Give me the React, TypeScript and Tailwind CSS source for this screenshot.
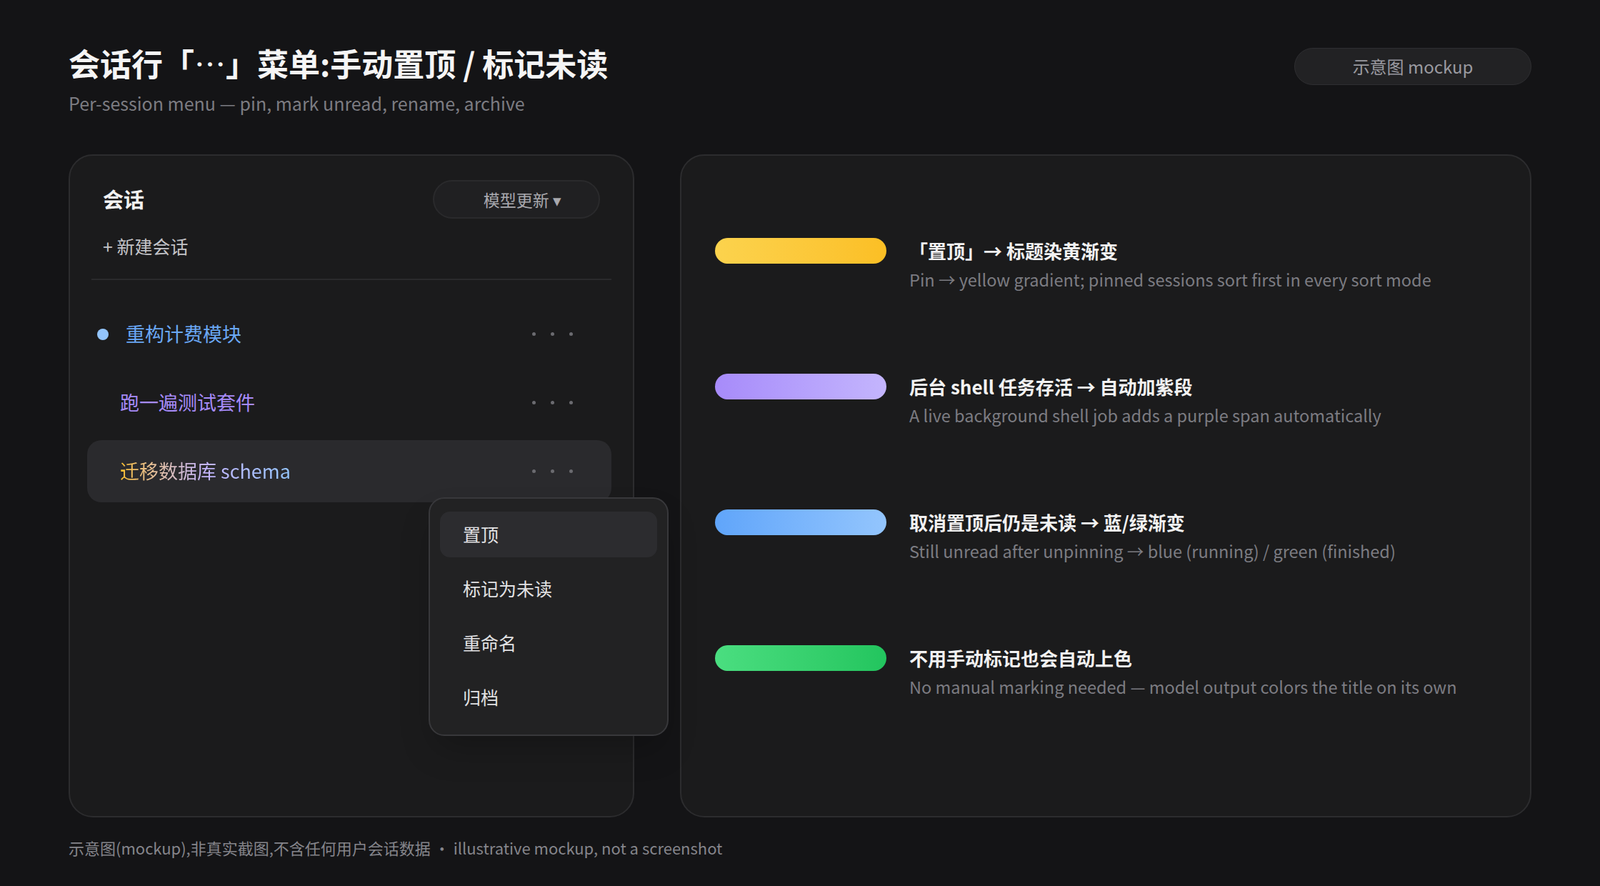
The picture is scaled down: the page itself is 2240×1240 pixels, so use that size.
export default function App() {
    const rules = [
        {
            bar: 'bg-gradient-to-r from-[#fcd34d] to-[#fbbf24]',
            title: '「置顶」→ 标题染黄渐变',
            desc: 'Pin → yellow gradient; pinned sessions sort first in every sort mode',
        },
        {
            bar: 'bg-gradient-to-r from-[#a78bfa] to-[#c4b5fd]',
            title: '后台 shell 任务存活 → 自动加紫段',
            desc: 'A live background shell job adds a purple span automatically',
        },
        {
            bar: 'bg-gradient-to-r from-[#60a5fa] to-[#93c5fd]',
            title: '取消置顶后仍是未读 → 蓝/绿渐变',
            desc: 'Still unread after unpinning → blue (running) / green (finished)',
        },
        {
            bar: 'bg-gradient-to-r from-[#4ade80] to-[#22c55e]',
            title: '不用手动标记也会自动上色',
            desc: 'No manual marking needed — model output colors the title on its own',
        },
    ];

    const menu = ['置顶', '标记为未读', '重命名', '归档'];

    const Dots = () => (
        <div className="flex gap-[21px] pr-[54px]">
            <span className="w-[5px] h-[5px] rounded-full bg-[#6b6b70]" />
            <span className="w-[5px] h-[5px] rounded-full bg-[#6b6b70]" />
            <span className="w-[5px] h-[5px] rounded-full bg-[#6b6b70]" />
        </div>
    );

    return (
        <div
            className="w-[2240px] h-[1240px] bg-[#141416] text-white px-[96px] pt-[58px] overflow-hidden"
            style={{ fontFamily: '"Noto Sans CJK SC", "Noto Sans", sans-serif' }}
        >
            {/* Header */}
            <div className="flex justify-between items-start h-[158px]">
                <div>
                    <h1 className="text-[44px] leading-[60px] font-bold text-[#f5f5f5]">
                        会话行「<span className="font-['Noto_Sans'] font-normal">…</span>」菜单:手动置顶 / 标记未读
                    </h1>
                    <p className="text-[25px] leading-[34px] mt-[9px] text-[#7c7c82]">
                        Per-session menu — pin, mark unread, rename, archive
                    </p>
                </div>
                <div className="mt-[9px] w-[332px] h-[52px] rounded-full bg-[#222224] border border-[#2e2e31] flex items-center justify-center text-[24px] text-[#9a9aa0]">
                    示意图 mockup
                </div>
            </div>

            <div className="flex gap-[64px]">
                {/* Left panel */}
                <div className="relative w-[792px] h-[928px] rounded-[34px] bg-[#1b1b1c] border-2 border-[#2c2c2e] px-[30px]">
                    <div className="flex items-center justify-between pl-[16px] pt-[34px] pr-[16px]">
                        <span className="text-[29px] font-bold text-[#f2f2f2]">会话</span>
                        <div className="w-[234px] h-[54px] rounded-full bg-[#202022] border-2 border-[#2a2a2c] flex items-center justify-end pr-[52px] text-[23px] text-[#a9a9ae]">
                            模型更新 ▾
                        </div>
                    </div>
                    <div className="pl-[16px] mt-[20px] text-[25px] text-[#c4c4c8]">+ 新建会话</div>
                    <div className="mt-[26px] h-[2px] bg-[#2a2a2c]" />

                    <div className="mt-[28px] flex flex-col">
                        <div className="h-[96px] flex items-center justify-between pl-[8px]">
                            <div className="flex items-center gap-[24px]">
                                <span className="w-[16px] h-[16px] rounded-full bg-[#93c5fd]" />
                                <span className="text-[27px] text-[#6aa8f5]">重构计费模块</span>
                            </div>
                            <Dots />
                        </div>
                        <div className="h-[96px] flex items-center justify-between pl-[40px]">
                            <span className="text-[27px] text-[#a78bfa]">跑一遍测试套件</span>
                            <Dots />
                        </div>
                        <div className="h-[87px] mt-[4px] -ml-[6px] mr-0 rounded-[20px] bg-[#2a2a2d] flex items-center justify-between pl-[46px]">
                            <span className="text-[27px] bg-gradient-to-r from-[#fbbf24] via-[#c4b5fd] to-[#93c5fd] bg-clip-text text-transparent">
                                迁移数据库 schema
                            </span>
                            <Dots />
                        </div>
                    </div>

                    {/* Context menu */}
                    <div className="absolute left-[502px] top-[478px] w-[336px] h-[334px] rounded-[22px] bg-[#222223] border-2 border-[#38383b] px-[14px] pt-[18px] shadow-2xl">
                        {menu.map((m, i) => (
                            <div
                                key={m}
                                className={`h-[64px] mb-[12px] rounded-[14px] flex items-center pl-[32px] text-[25px] text-[#e2e2e4] ${i === 0 ? 'bg-[#2c2c2f]' : ''}`}
                            >
                                {m}
                            </div>
                        ))}
                    </div>
                </div>

                {/* Right panel */}
                <div className="flex-1 h-[928px] rounded-[34px] bg-[#1b1b1c] border-2 border-[#2c2c2e] pl-[47px] pt-[114px] flex flex-col gap-[114px]">
                    {rules.map((r) => (
                        <div key={r.title} className="flex items-start gap-[32px]">
                            <div className={`w-[240px] h-[36px] rounded-full mt-[1px] ${r.bar}`} />
                            <div>
                                <div className="text-[26px] leading-[38px] font-bold text-[#f2f2f2]">{r.title}</div>
                                <div className="text-[23.5px] leading-[34px] mt-[4px] text-[#7c7c82]">{r.desc}</div>
                            </div>
                        </div>
                    ))}
                </div>
            </div>

            <div className="mt-[26px] text-[22px] text-[#85858b]">
                示意图(mockup),非真实截图,不含任何用户会话数据 · illustrative mockup, not a screenshot
            </div>
        </div>
    );
}
